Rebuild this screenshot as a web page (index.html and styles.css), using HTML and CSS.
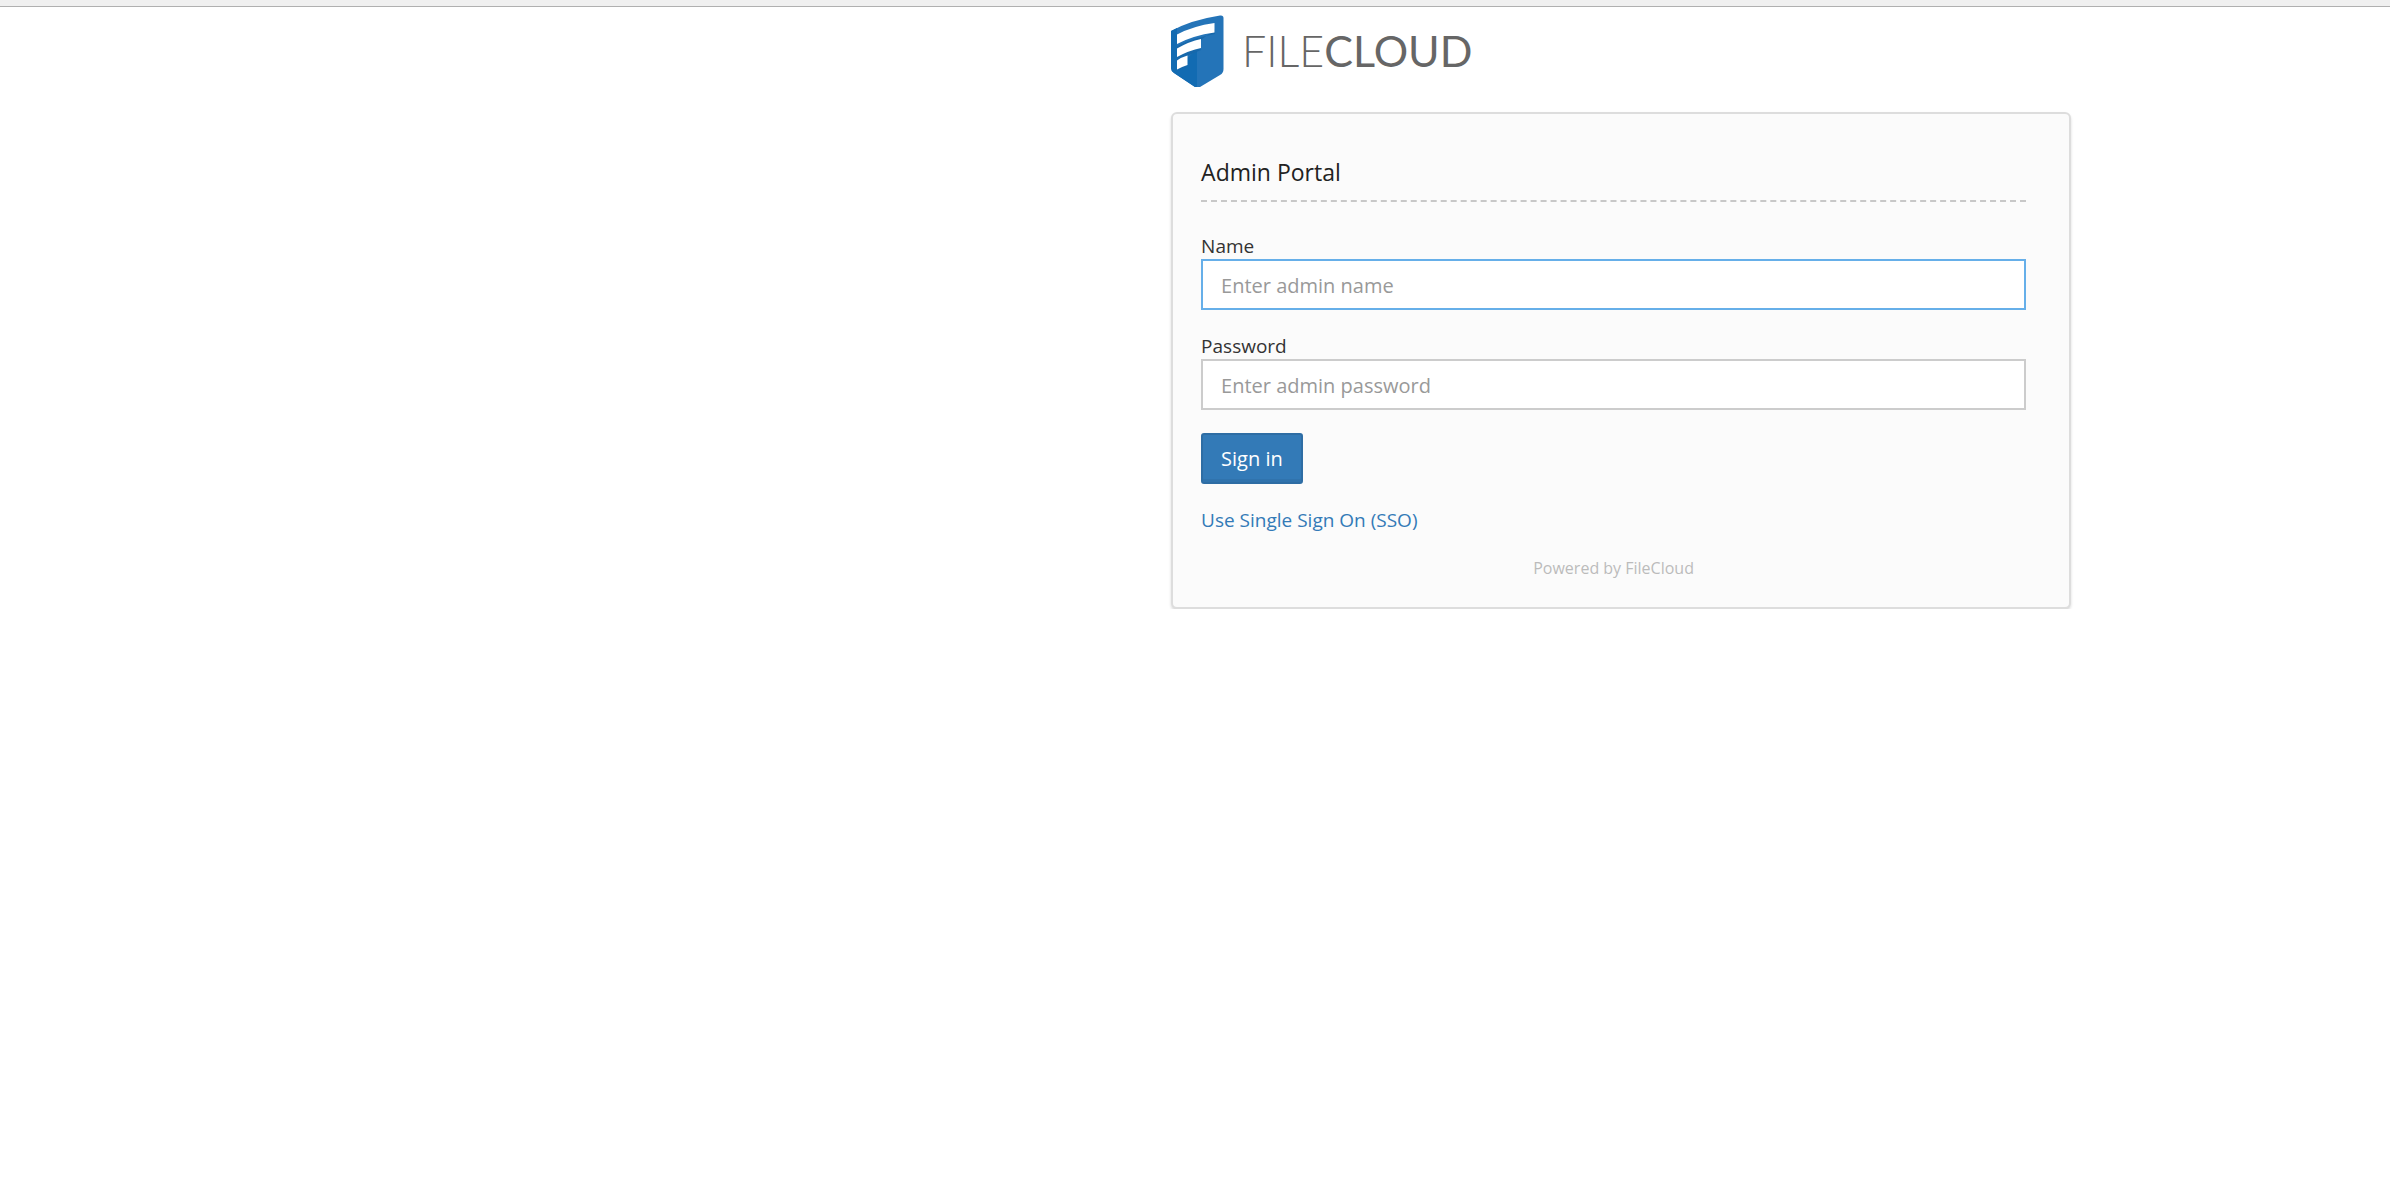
FILE: index.html
```html
<!DOCTYPE html>
<html lang="en">
<head>
  <meta charset="utf-8">
  <title>Admin Portal</title>
  <link rel="stylesheet" href="styles.css">
</head>
<body>
  <div class="topbar"></div>

  <main class="login">
    <div class="logo">
      <svg class="logo-mark" width="53" height="72" viewBox="0 0 53 72" aria-hidden="true">
        <path fill="#2474b8" d="M0 16Q20 5 49 .5Q52.500 0 52.500 3V54Q52.500 58 49 60L29 72H24L3 58Q0 56 0 53Z"/>
        <path fill="#126bb2" d="M0 16L6 13V53L26 34V72H24L3 58Q0 56 0 53Z"/>
        <path fill="#1768ab" d="M6 31Q22 23 44 19V14L30 25V35L16 41V52L6 55Z"/>
        <path fill="#fff" d="M6 19.500Q22 11 43.500 8V17.500Q22 20.500 6 29Z"/>
        <path fill="#fff" d="M6 33.500Q18 26.500 30 24V33Q18 35.500 6 42Z"/>
        <path fill="#fff" d="M6 45.500Q11 42 16.500 40.500V50Q11 51.500 6 54.500Z"/>
      </svg>
      <span class="logo-text">FILE<b>CLOUD</b></span>
    </div>

    <form class="card">
      <h1>Admin Portal</h1>

      <div class="field">
        <label for="name">Name</label>
        <input type="text" id="name" class="active" placeholder="Enter admin name">
      </div>

      <div class="field">
        <label for="password">Password</label>
        <input type="password" id="password" placeholder="Enter admin password">
      </div>

      <button type="submit">Sign in</button>
      <a class="sso" href="#">Use Single Sign On (SSO)</a>
      <p class="powered">Powered by FileCloud</p>
    </form>
  </main>
</body>
</html>
```
FILE: styles.css
```css
* {
  box-sizing: border-box;
}

body {
  margin: 0;
  background-color: #fff;
  color: #333;
  font-family: "Open Sans", sans-serif;
  font-size: 19px;
  line-height: 26px;
}

.topbar {
  height: 7px;
  background-color: #f0f0f0;
  border-bottom: 1px solid #b0b0b0;
}

.login {
  max-width: 900px;
  margin-left: 49%;
  padding-top: 8px;
}

.logo {
  display: flex;
  align-items: center;
  gap: 18px;
  height: 72px;
  margin-bottom: 25px;
}

.logo-text {
  color: #666;
  font-family: Lato, sans-serif;
  font-size: 43px;
  font-weight: 300;
  line-height: 72px;
}

.logo-text b {
  font-weight: 400;
}

/* Login box */
.card {
  padding: 43px 43px 26px 28px;
  background-color: #fbfbfb;
  border: 2px solid #ddd;
  border-radius: 6px;
  box-shadow: 0 2px 3px rgba(0, 0, 0, 0.15);
}

h1 {
  margin: 0 0 31px;
  padding-bottom: 13px;
  border-bottom: 2px dashed #c8c8c8;
  color: #222;
  font-size: 23px;
  font-weight: 400;
  line-height: 30px;
}

.field {
  margin-bottom: 23px;
}

label {
  display: block;
}

input {
  display: block;
  width: 100%;
  height: 51px;
  padding: 2px 18px 0;
  background-color: #fff;
  border: 2px solid #ccc;
  font-family: inherit;
  font-size: 20px;
}

input.active {
  border-color: #66afe9;
}

input::placeholder {
  color: #999;
}

button {
  display: block;
  height: 51px;
  padding: 0 18px;
  background-color: #337ab7;
  border: 2px solid #2e6da4;
  border-radius: 3px;
  box-shadow: inset 0 -3px 0 rgba(0, 0, 0, 0.05);
  color: #fff;
  font-family: inherit;
  font-size: 20px;
}

.sso {
  display: inline-block;
  margin-top: 23px;
  color: #337ab7;
  text-decoration: none;
}

.powered {
  margin: 22px 0 0;
  color: #bbb;
  font-size: 16px;
  text-align: center;
}
```
